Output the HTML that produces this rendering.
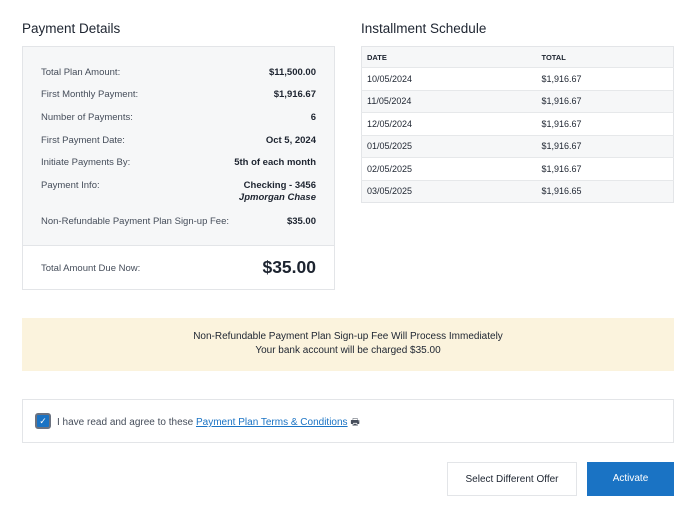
<!DOCTYPE html>
<html><head><style>
*{box-sizing:border-box;margin:0;padding:0}
body{width:700px;height:512px;background:#fff;font-family:"Liberation Sans",sans-serif;color:#1d2430;position:relative;overflow:hidden}
.abs{position:absolute}
h2{position:absolute;font-size:13.5px;font-weight:normal;color:#1d2430}
.box{left:22px;top:46px;width:313px;height:244px;border:1px solid #e3e5e8}
.gray{position:absolute;left:0;top:0;right:0;height:199px;background:#f6f7f8;border-bottom:1px solid #e3e5e8}
.row{position:absolute;left:18px;right:18px;font-size:9.5px;color:#454d5a}
.row b{position:absolute;right:0;top:0;color:#1d2430;text-align:right}
table{position:absolute;left:361px;top:46px;width:313px;border-collapse:collapse;border:1px solid #e3e5e8;font-size:9px;color:#1d2430}
td{height:22.5px;padding-left:5px;border-top:1px solid #e6e8ea}
th{height:21px;text-align:left;padding-left:5px;font-size:7.5px;font-weight:bold}
</style></head><body>
<h2 style="left:22px;top:21px">Payment Details</h2>
<h2 style="left:361px;top:21px">Installment Schedule</h2>
<div class="abs box">
<div class="gray">
<div class="row" style="top:20px">Total Plan Amount:<b>$11,500.00</b></div>
<div class="row" style="top:42px">First Monthly Payment:<b>$1,916.67</b></div>
<div class="row" style="top:65px">Number of Payments:<b>6</b></div>
<div class="row" style="top:88px">First Payment Date:<b>Oct 5, 2024</b></div>
<div class="row" style="top:110px">Initiate Payments By:<b>5th of each month</b></div>
<div class="row" style="top:133px">Payment Info:<b>Checking - 3456<br><i style="line-height:14px">Jpmorgan Chase</i></b></div>
<div class="row" style="top:169px">Non-Refundable Payment Plan Sign-up Fee:<b>$35.00</b></div>
</div>
<div class="row" style="top:216px">Total Amount Due Now:<b style="font-size:17.5px;top:-6px">$35.00</b></div>
</div>
<table>
<tr style="background:#f6f7f8"><th style="width:175px">DATE</th><th>TOTAL</th></tr>
<tr style="background:#fff"><td>10/05/2024</td><td>$1,916.67</td></tr>
<tr style="background:#f6f7f8"><td>11/05/2024</td><td>$1,916.67</td></tr>
<tr style="background:#fff"><td>12/05/2024</td><td>$1,916.67</td></tr>
<tr style="background:#f6f7f8"><td>01/05/2025</td><td>$1,916.67</td></tr>
<tr style="background:#fff"><td>02/05/2025</td><td>$1,916.67</td></tr>
<tr style="background:#f6f7f8"><td>03/05/2025</td><td>$1,916.65</td></tr>
</table>
<div class="abs" style="left:22px;top:318px;width:652px;height:53px;background:#fbf3dd;text-align:center;font-size:10px;line-height:14px;padding-top:12px">Non-Refundable Payment Plan Sign-up Fee Will Process Immediately<br>Your bank account will be charged $35.00</div>
<div class="abs" style="left:22px;top:399px;width:652px;height:44px;border:1px solid #e3e5e8">
<div class="abs" style="left:12px;top:13px;width:16px;height:16px;border:2px solid #6b7280;border-radius:3px;background:#1a73c4;color:#fff;font-size:9px;text-align:center;line-height:12px">✓</div>
<div class="abs" style="left:34px;top:15px;font-size:10px;color:#454d5a">I have read and agree to these <span style="color:#1a73c4;text-decoration:underline">Payment Plan Terms &amp; Conditions</span> <span style="font-size:10px">🖶</span></div>
</div>
<div class="abs" style="left:447px;top:462px;width:130px;height:34px;border:1px solid #e3e5e8;font-size:10px;text-align:center;line-height:34px">Select Different Offer</div>
<div class="abs" style="left:587px;top:462px;width:87px;height:34px;background:#1a73c4;color:#fff;font-size:10px;text-align:center;line-height:34px">Activate</div>
</body></html>
